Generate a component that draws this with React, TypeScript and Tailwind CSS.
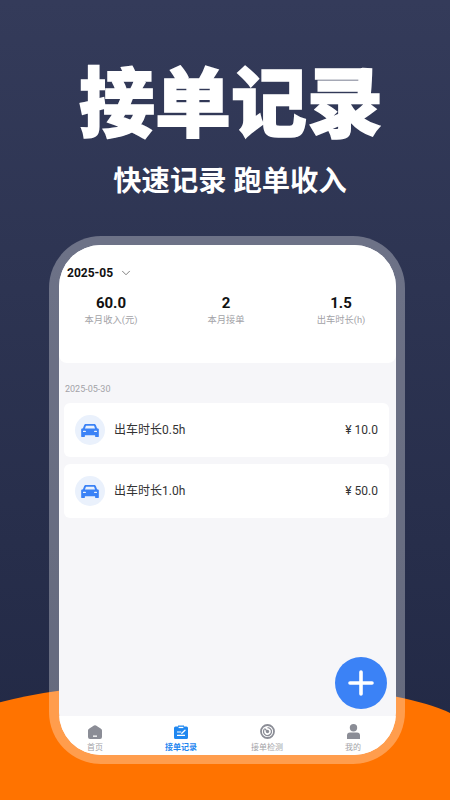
import { ChevronDown } from "lucide-react";

const SANS = "font-['Roboto','Noto_Sans_CJK_SC',sans-serif]";

function CarIcon() {
  return (
    <svg width="18" height="15" viewBox="0 0 20 17" fill="#3b82f6">
      <path d="M5.2 1h9.6c.8 0 1.5.5 1.8 1.2L18 6l1 .2c.5.1 1 .5 1 1V15a1 1 0 0 1-1 1h-2.2a1 1 0 0 1-1-1v-1H4.200v1a1 1 0 0 1-1 1H1a1 1 0 0 1-1-1V7.200c0-.5.4-.9 1-1L2 6l1.400-3.800C3.700 1.500 4.400 1 5.200 1Z" />
      <path d="M5.400 3h9.200l1.100 3.200H4.300L5.400 3Z" fill="#eaf1fc" />
      <rect x="2" y="8.800" width="3.400" height="1.500" rx=".7" fill="#eaf1fc" />
      <rect x="14.600" y="8.800" width="3.400" height="1.500" rx=".7" fill="#eaf1fc" />
    </svg>
  );
}

function HomeIcon() {
  return (
    <svg width="14" height="14" viewBox="0 0 14 14">
      <path d="M6 .5a1.700 1.700 0 0 1 2 0l5 3.200c.6.4 1 1 1 1.700V12a2 2 0 0 1-2 2H2a2 2 0 0 1-2-2V5.400c0-.7.400-1.300 1-1.700L6 .5Z" fill="#8b8d96" />
      <rect x="5" y="10.500" width="4" height="1.300" fill="#fff" />
    </svg>
  );
}

function RecordIcon() {
  return (
    <svg width="14" height="14" viewBox="0 0 14 14">
      <path d="M1.500 1.500H4V.6h6v.9h2.500A1.500 1.500 0 0 1 14 3v9.500a1.500 1.500 0 0 1-1.500 1.500h-11A1.500 1.500 0 0 1 0 12.500V3a1.500 1.500 0 0 1 1.500-1.500Z" fill="#1f87f0" />
      <rect x="4.600" y="1.800" width="4.800" height="1.300" fill="#fff" />
      <path d="M3 7h4.200M3 10.400h8" stroke="#fff" strokeWidth="1.200" />
      <path d="M7.800 8.200 11 5.200" stroke="#fff" strokeWidth="1.300" strokeLinecap="round" />
    </svg>
  );
}

function RadarIcon() {
  return (
    <svg width="15" height="15" viewBox="0 0 15 15" fill="none" stroke="#8b8d96">
      <circle cx="7.500" cy="7.500" r="6.500" strokeWidth="1.800" />
      <path d="M4.300 5.200A4 4 0 1 0 7.500 3.600" strokeWidth="1.300" />
      <circle cx="7.500" cy="7.500" r="1.700" fill="#8b8d96" stroke="none" />
      <path d="M4.500 4.500 7.500 7.500" strokeWidth="1.300" />
    </svg>
  );
}

function UserIcon() {
  return (
    <svg width="13" height="15" viewBox="0 0 13 15" fill="#8b8d96">
      <circle cx="6.500" cy="3.800" r="3.700" />
      <path d="M3 8.400h7A3 3 0 0 1 13 11.400V15H0v-3.600a3 3 0 0 1 3-3Z" />
    </svg>
  );
}

const stats = [
  { value: "60.0", label: "本月收入(元)" },
  { value: "2", label: "本月接单" },
  { value: "1.5", label: "出车时长(h)" },
];

const orders = [
  { title: "出车时长0.5h", amount: "¥ 10.0" },
  { title: "出车时长1.0h", amount: "¥ 50.0" },
];

const tabs = [
  { label: "首页", icon: <HomeIcon /> },
  { label: "接单记录", icon: <RecordIcon />, active: true },
  { label: "接单检测", icon: <RadarIcon /> },
  { label: "我的", icon: <UserIcon /> },
];

export default function App() {
  return (
    <div className={`relative h-[800px] w-[450px] overflow-hidden bg-gradient-to-b from-[#343b5a] to-[#212844] ${SANS}`}>
      {/* orange hill behind the phone */}
      <div className="absolute left-[-50px] top-[681px] h-[119px] w-[520px] rounded-tl-[260px_52px] rounded-tr-[260px_52px] bg-[#ff7300]" />

      <div className="relative flex flex-col items-center">
        <h1 className="ml-[12px] mt-[54px] h-[102px] text-[76px] font-black leading-[102px] text-white [-webkit-text-stroke:1.5px_white]">
          接单记录
        </h1>
        <p className="ml-[10px] mt-[7px] h-[38px] text-[28.3px] font-bold leading-[38px] text-white">
          快速记录 跑单收入
        </p>

        <div className="ml-[4px] mt-[35px] rounded-[52px] bg-white/30 p-[9px] pl-[10px]">
          <div className="relative flex h-[510px] w-[337px] flex-col overflow-hidden rounded-[42px] bg-[#f6f6f9]">
            <section className="h-[118px] rounded-b-[8px] bg-white">
              <div className="mt-[19px] flex h-[18px] items-center pl-[8px]">
                <span className="text-[12px] font-bold leading-[18px] text-[#111]">2025-05</span>
                <ChevronDown size={14} strokeWidth={1.4} className="ml-[6px] text-[#666]" />
              </div>
              <div className="mt-[11px] flex justify-between pl-[2px] pr-[5px]">
                {stats.map((stat) => (
                  <div key={stat.label} className="flex w-[100px] flex-col items-center">
                    <span className="text-[15px] font-bold leading-[20px] text-[#111]">{stat.value}</span>
                    <span className="mt-[1px] text-[9.3px] leading-[12px] text-[#a3a3a8]">{stat.label}</span>
                  </div>
                ))}
              </div>
            </section>

            <div className="flex-1 pl-[5px] pr-[7px]">
              <p className="mt-[20px] pl-[1px] text-[9px] leading-[12px] text-[#a3a3a8]">2025-05-30</p>
              <div className="mt-[8px] space-y-[7px]">
                {orders.map((order) => (
                  <article key={order.title} className="flex h-[54px] items-center rounded-[6px] bg-white pl-[11px] pr-[11px]">
                    <div className="flex h-[30px] w-[30px] items-center justify-center rounded-full bg-[#eaf1fc]">
                      <CarIcon />
                    </div>
                    <span className="ml-[9px] text-[12px] text-[#333]">{order.title}</span>
                    <span className="ml-auto text-[12px] text-[#333]">{order.amount}</span>
                  </article>
                ))}
              </div>
            </div>

            <nav className="-ml-[7px] grid h-[39px] w-[344px] grid-cols-4 bg-white">
              {tabs.map((tab) => (
                <div key={tab.label} className="flex flex-col items-center pt-[8px]">
                  <div className="flex h-[15px] items-center">{tab.icon}</div>
                  <span className={`mt-[4px] text-[8px] leading-[10px] ${tab.active ? "font-bold text-[#1f87f0]" : "text-[#a3a3a8]"}`}>
                    {tab.label}
                  </span>
                </div>
              ))}
            </nav>

            <button className="absolute left-[276px] top-[412px] flex h-[52px] w-[52px] items-center justify-center rounded-full bg-[#3b82f6]">
              <svg width="26" height="26" viewBox="0 0 26 26" stroke="#fff" strokeWidth="3.600" strokeLinecap="round">
                <path d="M13 2v22M2 13h22" />
              </svg>
            </button>
          </div>
        </div>
      </div>
    </div>
  );
}
